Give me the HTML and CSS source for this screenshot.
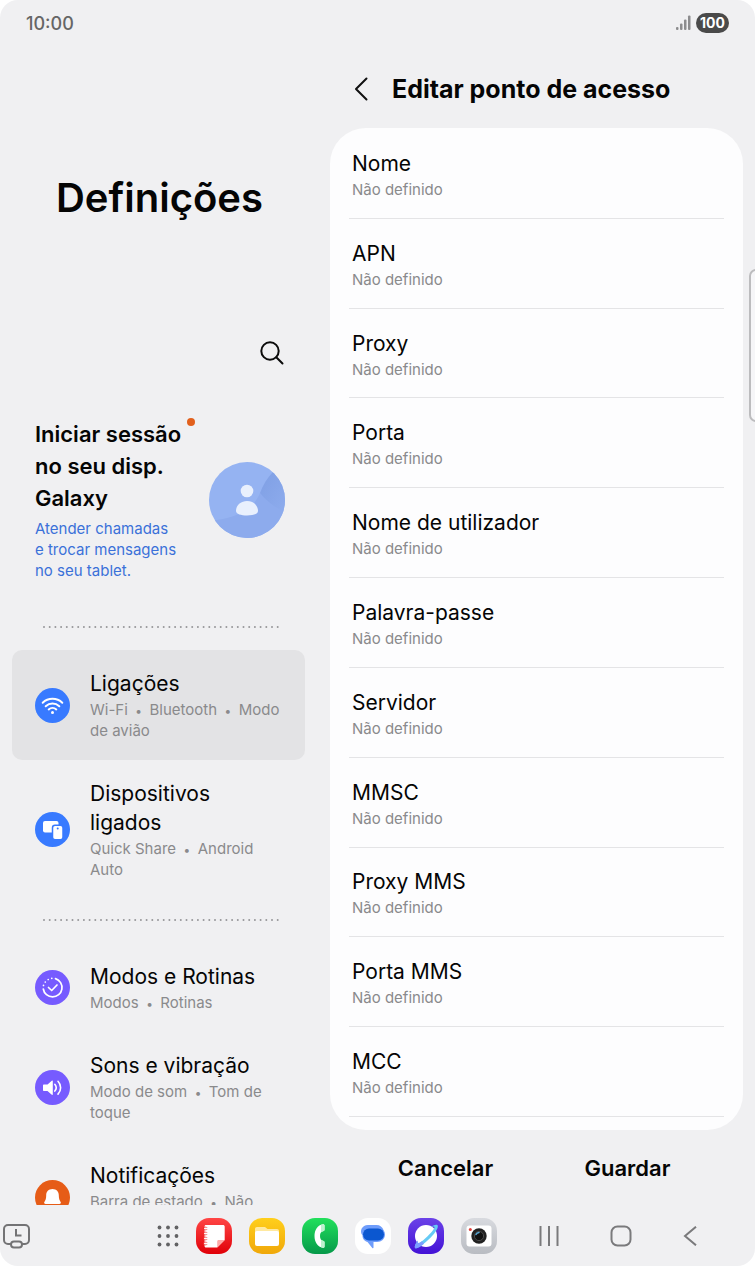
FILE: index.html
```html
<!DOCTYPE html>
<html lang="pt">
<head>
	<meta charset="utf-8">
	<meta name="viewport" content="width=device-width, initial-scale=1">
	<title>Definições</title>
	<link rel="stylesheet" href="styles.css">
</head>
<body>
	<div class="screen">
		<header class="statusbar">
			<span class="clock">10:00</span>
			<svg class="signal" width="15" height="16" viewBox="0 0 15 16" fill="#8c8c8e">
				<rect x="0" y="12" width="2.500" height="3" rx="1"/>
				<rect x="4" y="8.500" width="2.500" height="6.500" rx="1"/>
				<rect x="8" y="4.500" width="2.500" height="10.500" rx="1"/>
				<rect x="12" y="0.500" width="2.500" height="14.500" rx="1"/>
			</svg>
			<span class="battery">100</span>
		</header>

		<main class="panes">
			<nav class="sidebar">
				<h1 class="title">Definições</h1>
				<button class="search" aria-label="Procurar">
					<svg width="24" height="24" viewBox="0 0 24 24" fill="none" stroke="#0b0b0b" stroke-width="2" stroke-linecap="round">
						<circle cx="10" cy="10" r="8.700"/>
						<path d="M16.300 16.300 22.500 22.500"/>
					</svg>
				</button>

				<a class="account" href="#">
					<span class="account-text">
						<span class="account-title">Iniciar sessão<br>no seu disp.<br>Galaxy<i class="dot"></i></span>
						<span class="account-sub">Atender chamadas<br>e trocar mensagens<br>no seu tablet.</span>
					</span>
					<svg width="76" height="76" viewBox="0 0 76 76">
						<defs>
							<clipPath id="avatar"><circle cx="38" cy="38" r="38"/></clipPath>
							<linearGradient id="fold" x1="0" y1="0" x2="1" y2="1"><stop offset="0" stop-color="#7f9fe4"/><stop offset="1" stop-color="#8fadee"/></linearGradient>
						</defs>
						<g clip-path="url(#avatar)">
							<rect width="76" height="76" fill="#95b3f2"/>
							<path d="M0 59C28 56 44 48 51 31L76 50V76H0z" fill="#8dabed"/>
							<path d="M51 31C54 23 58 16 64 10L80 20V52C70 48 59 41 51 31z" fill="url(#fold)"/>
						</g>
						<circle cx="38" cy="29" r="6.300" fill="#e9f0fd"/>
						<path d="M27 49c0-6 5-10 11-10s11 4 11 10c0 3-5 4.500-11 4.500S27 52 27 49z" fill="#e9f0fd"/>
					</svg>
				</a>

				<svg class="dots" height="2"><line x1="1" y1="1" x2="100%" y2="1"/></svg>

				<a class="item selected" href="#">
					<svg class="icon" viewBox="0 0 35 35">
						<circle cx="17.500" cy="17.500" r="17.500" fill="#387aff"/>
						<g fill="none" stroke="#fff" stroke-width="2" stroke-linecap="round">
							<path d="M7.700 14.700c5.500-5.200 14.100-5.200 19.600 0"/>
							<path d="M10.700 18.200c3.900-3.600 9.700-3.600 13.600 0"/>
							<path d="M13.700 21.400c2.200-2 5.400-2 7.600 0"/>
						</g>
						<circle cx="17.500" cy="24.400" r="1.500" fill="#fff"/>
					</svg>
					<span class="text">
						<span class="label">Ligações</span>
						<span class="sub">Wi-Fi<b>•</b>Bluetooth<b>•</b>Modo<br>de avião</span>
					</span>
				</a>
				<a class="item" href="#">
					<svg class="icon" viewBox="0 0 35 35">
						<circle cx="17.500" cy="17.500" r="17.500" fill="#387aff"/>
						<rect x="8" y="9" width="15.500" height="11.500" rx="2" fill="#fff"/>
						<rect x="17.500" y="13.200" width="10.500" height="14.500" rx="2.500" fill="#fff" stroke="#387aff" stroke-width="1.500"/>
						<circle cx="22.700" cy="16.500" r="1" fill="#387aff"/>
					</svg>
					<span class="text">
						<span class="label">Dispositivos<br>ligados</span>
						<span class="sub">Quick Share<b>•</b>Android<br>Auto</span>
					</span>
				</a>

				<svg class="dots" height="2"><line x1="1" y1="1" x2="100%" y2="1"/></svg>

				<a class="item" href="#">
					<svg class="icon" viewBox="0 0 35 35">
						<circle cx="17.500" cy="17.500" r="17.500" fill="#765bff"/>
						<g fill="none" stroke="#fff" stroke-width="1.700" stroke-linecap="round">
							<path d="M20.500 8.600A9.400 9.400 0 1 1 8.300 19"/>
							<path d="M8.500 15.400v0M10.300 12v0M13.200 9.500v0M16.800 8.300v0"/>
							<path d="M13.500 17.500 16.700 20.500 22 15" stroke-linejoin="round"/>
						</g>
					</svg>
					<span class="text">
						<span class="label">Modos e Rotinas</span>
						<span class="sub">Modos<b>•</b>Rotinas</span>
					</span>
				</a>
				<a class="item" href="#">
					<svg class="icon" viewBox="0 0 35 35">
						<circle cx="17.500" cy="17.500" r="17.500" fill="#765bff"/>
						<path d="M9 14.500h3.500l4.300-3.800c.5-.4 1-.2 1 .5v13c0 .7-.5.900-1 .5l-4.300-3.800H9c-.6 0-1-.4-1-1v-4.400c0-.6.4-1 1-1z" fill="#fff"/>
						<path d="M20.500 14.300c1.700 2 1.700 4.800 0 6.800M23.700 11.300c3.500 3.700 3.500 9.100 0 12.800" transform="translate(-.7 0)" fill="none" stroke="#fff" stroke-width="1.600" stroke-linecap="round"/>
					</svg>
					<span class="text">
						<span class="label">Sons e vibração</span>
						<span class="sub">Modo de som<b>•</b>Tom de<br>toque</span>
					</span>
				</a>
				<a class="item" href="#">
					<svg class="icon" viewBox="0 0 35 35">
						<circle cx="17.500" cy="17.500" r="17.500" fill="#e65c17"/>
						<path d="M17.500 9c-4 0-6.300 2.800-6.300 6.300 0 3.500-.7 5-1.700 6.500-.8 1.200-.2 2.200 1 2.200h14c1.200 0 1.800-1 1-2.200-1-1.500-1.700-3-1.700-6.500 0-3.500-2.300-6.300-6.300-6.300zM15 25h5a2.500 2.500 0 0 1-5 0z" fill="#fff"/>
					</svg>
					<span class="text">
						<span class="label">Notificações</span>
						<span class="sub">Barra de estado<b>•</b>Não<br>incomodar</span>
					</span>
				</a>
			</nav>

			<section class="detail">
				<div class="detail-head">
					<button class="back" aria-label="Voltar">
						<svg width="14" height="24" viewBox="0 0 14 24" fill="none" stroke="#111" stroke-width="2" stroke-linecap="round" stroke-linejoin="round">
							<path d="M12.500 1.500 2 12l10.500 10.500"/>
						</svg>
					</button>
					<h2 class="subtitle">Editar ponto de acesso</h2>
				</div>
				<div class="card">
					<button class="field"><span class="label">Nome</span><span class="sub">Não definido</span></button>
					<button class="field"><span class="label">APN</span><span class="sub">Não definido</span></button>
					<button class="field"><span class="label">Proxy</span><span class="sub">Não definido</span></button>
					<button class="field"><span class="label">Porta</span><span class="sub">Não definido</span></button>
					<button class="field"><span class="label">Nome de utilizador</span><span class="sub">Não definido</span></button>
					<button class="field"><span class="label">Palavra-passe</span><span class="sub">Não definido</span></button>
					<button class="field"><span class="label">Servidor</span><span class="sub">Não definido</span></button>
					<button class="field"><span class="label">MMSC</span><span class="sub">Não definido</span></button>
					<button class="field"><span class="label">Proxy MMS</span><span class="sub">Não definido</span></button>
					<button class="field"><span class="label">Porta MMS</span><span class="sub">Não definido</span></button>
					<button class="field"><span class="label">MCC</span><span class="sub">Não definido</span></button>
				</div>
				<div class="actions">
					<button class="action">Cancelar</button>
					<button class="action">Guardar</button>
				</div>
			</section>
		</main>

		<footer class="taskbar">
			<button aria-label="Recentes">
				<svg width="28" height="26" viewBox="0 0 28 26" fill="none" stroke="#737375" stroke-width="2">
					<path d="M8 21H5a4 4 0 0 1-4-4V6a4 4 0 0 1 4-4h17a4 4 0 0 1 4 4v11a4 4 0 0 1-4 4h-3"/>
					<rect x="8" y="18.500" width="11" height="6" rx="3"/>
					<path d="M13 6v6.500h5.500"/>
				</svg>
			</button>
			<div class="apps">
				<button aria-label="Aplicações">
					<svg width="22" height="22" viewBox="0 0 22 22" fill="#626264">
						<circle cx="2.500" cy="2.500" r="1.900"/><circle cx="11" cy="2.500" r="1.900"/><circle cx="19.500" cy="2.500" r="1.900"/>
						<circle cx="2.500" cy="11" r="1.900"/><circle cx="11" cy="11" r="1.900"/><circle cx="19.500" cy="11" r="1.900"/>
						<circle cx="2.500" cy="19.500" r="1.900"/><circle cx="11" cy="19.500" r="1.900"/><circle cx="19.500" cy="19.500" r="1.900"/>
					</svg>
				</button>
				<button class="app notes" aria-label="Notas">
					<svg viewBox="0 0 36 36">
						<path d="M10 7h17c1 0 1.700.7 1.700 1.700V22l-7.500 7.500H10c-1 0-1.500-.6-1.500-1.500V8.500C8.500 7.600 9 7 10 7z" fill="#fff"/>
						<path d="M28.700 22h-6c-1 0-1.500.6-1.500 1.500v6z" fill="#ffaaa8"/>
						<path d="M8.500 10.500h1.500M8.500 15.500h1.500M8.500 20.500h1.500M8.500 25.500h1.500" stroke="#f12b2b" stroke-width="3.400" stroke-linecap="round"/>
						<path d="M9 10.500h3M9 15.500h3M9 20.500h3M9 25.500h3" stroke="#fff" stroke-width="2" stroke-linecap="round"/>
					</svg>
				</button>
				<button class="app files" aria-label="Os meus ficheiros">
					<svg viewBox="0 0 36 36">
						<path d="M6 11c0-1.200.8-2 2-2h8l2.500 2H28c1.200 0 2 .8 2 2v5H6z" fill="#ffe9a0"/>
						<rect x="6" y="13" width="24" height="15" rx="2" fill="#fff"/>
					</svg>
				</button>
				<button class="app phone" aria-label="Telefone">
					<svg viewBox="0 0 36 36">
						<path d="M21 6.200c-5.500.6-8.500 6-8.500 11.800s3 11.200 8.500 11.800c.9.100 1.500-.5 1.500-1.400v-4.200c0-.9-.6-1.400-1.500-1.500-2-.2-3-2-3-4.700s1-4.500 3-4.700c.9-.1 1.500-.6 1.500-1.500V7.600c0-.9-.6-1.500-1.500-1.400z" fill="#fff"/>
						<path d="M21 22.700c.9.100 1.500.6 1.500 1.500v4.200c0 .9-.6 1.500-1.500 1.400l-2-.5V22zM21 13.300c.9-.1 1.500-.6 1.500-1.500V7.600c0-.9-.6-1.500-1.500-1.400l-2 .5V14z" fill="#bdf2cf"/>
					</svg>
				</button>
				<button class="app messages" aria-label="Mensagens">
					<svg viewBox="0 0 36 36">
						<path d="M13 7h8.500c3.500 0 6 2 7 5 1 1.500 1.500 3 1.500 4.500 0 4.500-3.500 7.500-8 7.500h-3.500v5.500c0 .8-.7 1-1.200.5L12.500 24C8.500 22.800 7.500 20 7.500 17.500 4 13 7 7 13 7z" fill="#6f9dfb"/>
						<rect x="8" y="10.500" width="21" height="12" rx="6" fill="#0b57d0"/>
					</svg>
				</button>
				<button class="app browser" aria-label="Internet">
					<svg viewBox="0 0 36 36">
						<circle cx="18" cy="18" r="11" fill="#fff"/>
						<path d="M10 22.500C7 26 6 29.500 7.500 30.300 11 31.500 31 14 29.800 7.800 29.200 5.600 25.500 7 22 9.300c2.300-.7 4.500-1.300 4.500-.1C26.500 12 13.500 25 10.500 25c-1 0-.9-1.200-.5-2.500z" fill="#66cbf5"/>
						<path d="M10 22.500C7 26 6 29.500 7.500 30.300c1.200.5 4.700-1.500 8.500-4.600l-2-2.500c-1.600 1.100-2.800 1.800-3.500 1.800-1 0-.9-1.200-.5-2.500z" fill="#7d9dff"/>
					</svg>
				</button>
				<button class="app camera" aria-label="Câmara">
					<svg viewBox="0 0 36 36">
						<rect x="5.500" y="7.500" width="25" height="21" rx="3" fill="#fff"/>
						<circle cx="9.300" cy="11.500" r="1.500" fill="#e0403b"/>
						<circle cx="18" cy="18" r="7.700" fill="#222"/>
						<circle cx="18" cy="18" r="4.600" fill="#111" stroke="#4a4a4a" stroke-width="1"/>
						<path d="M15 16.500a3.500 3.500 0 0 1 3-2" stroke="#59a9d8" stroke-width="1.500" fill="none" stroke-linecap="round"/>
					</svg>
				</button>
			</div>
			<div class="keys">
				<button aria-label="Recentes">
					<svg width="20" height="20" viewBox="0 0 20 20" stroke="#7a7a7c" stroke-width="2"><path d="M1.500 0v20M10 0v20M18.500 0v20"/></svg>
				</button>
				<button aria-label="Início">
					<svg width="22" height="22" viewBox="0 0 22 22" fill="none" stroke="#7a7a7c" stroke-width="2"><rect x="1.500" y="1.500" width="19" height="19" rx="6"/></svg>
				</button>
				<button aria-label="Voltar">
					<svg width="14" height="20" viewBox="0 0 14 20" fill="none" stroke="#7a7a7c" stroke-width="2"><path d="M13 .7 2 10l11 9.300"/></svg>
				</button>
			</div>
		</footer>

		<div class="edge"></div>
	</div>
</body>
</html>
```
FILE: styles.css
```css
* {
	box-sizing: border-box;
}
body {
	margin: 0;
	background: #fff;
	color: #050505;
	font-family: Inter, Roboto, sans-serif;
}
a {
	color: inherit;
	text-decoration: none;
}
button {
	padding: 0;
	border: 0;
	background: none;
	color: inherit;
	font: inherit;
	cursor: pointer;
}
svg {
	display: block;
	flex-shrink: 0;
}
.screen {
	position: relative;
	display: flex;
	flex-direction: column;
	height: 100vh;
	overflow: hidden;
	border-radius: 18px;
	background: #f0f0f2;
}

/* status bar */
.statusbar {
	display: flex;
	align-items: center;
	height: 46px;
	padding: 0 26px;
}
.clock {
	margin-right: auto;
	color: #666;
	font-size: 18px;
	font-weight: 500;
}
.battery {
	margin-left: 5px;
	padding: 0 4px;
	border-radius: 10px;
	background: #4a4a4a;
	color: #fff;
	font-size: 14px;
	font-weight: 700;
	line-height: 20px;
}

/* panes */
.panes {
	display: flex;
	flex: 1;
	min-height: 0;
}
.sidebar {
	width: 317px;
	padding: 0 12px;
	overflow: hidden;
}
.title {
	margin: 124px 0 0;
	padding-left: 2px;
	font-size: 40px;
	font-weight: 600;
	line-height: 56px;
	text-align: center;
}
.search {
	display: block;
	margin: 115px 21px 0 auto;
}
.account {
	display: flex;
	align-items: center;
	justify-content: space-between;
	padding: 53px 20px 45px 23px;
}
.account-text,
.account-title,
.account-sub,
.label,
.sub {
	display: block;
}
.account-title {
	position: relative;
	font-size: 22px;
	font-weight: 600;
	line-height: 32px;
}
.dot {
	position: absolute;
	top: 0;
	right: -14px;
	width: 8px;
	height: 8px;
	border-radius: 50%;
	background: #e2601c;
}
.account-sub {
	padding-top: 4px;
	color: #3b71d9;
	font-size: 15px;
	line-height: 21px;
}
.dots {
	width: 236px;
	margin: 0 auto 22px 31px;
	stroke: #97979a;
	stroke-width: 2;
	stroke-linecap: round;
	stroke-dasharray: 0 5.700;
}
.item {
	display: flex;
	align-items: center;
	gap: 20px;
	padding: 19px 12px 19px 23px;
	border-radius: 10px;
}
.item + .dots {
	margin-top: 20px;
}
.selected {
	background: #e3e3e5;
}
.icon {
	width: 35px;
	height: 35px;
}
.label {
	font-size: 21px;
	line-height: 29px;
}
.sub {
	padding-top: 1px;
	color: #8a8a8c;
	font-size: 15px;
	line-height: 21px;
	white-space: nowrap;
}
.sub b {
	margin: 0 8px;
	font-size: 12px;
	line-height: 1;
}

/* access point form */
.detail {
	display: flex;
	flex: 1;
	flex-direction: column;
	padding: 0 12px 0 13px;
}
.detail-head {
	display: flex;
	align-items: center;
	gap: 24px;
	height: 82px;
	padding: 4px 0 0 24px;
}
.subtitle {
	margin: 0;
	font-size: 25px;
	font-weight: 700;
	line-height: 32px;
}
.card {
	display: flex;
	flex: 1;
	flex-direction: column;
	padding: 1px 19px 13px;
	border-radius: 36px;
	background: #fdfdfe;
}
.field {
	flex: 1;
	padding: 2px 3px 0;
	border-bottom: 1px solid #e4e4e6;
	text-align: left;
}
.actions {
	display: flex;
	justify-content: center;
	height: 75px;
}
.action {
	width: 182px;
	font-size: 22px;
	font-weight: 600;
}

/* taskbar */
.taskbar {
	display: flex;
	align-items: center;
	height: 61px;
	padding: 0 58px 0 3px;
}
.apps {
	display: flex;
	align-items: center;
	gap: 17px;
	margin: 0 42px 0 auto;
}
.app {
	width: 36px;
	height: 36px;
	border-radius: 13px;
}
.notes {
	background: linear-gradient(#ff4645, #e00008);
}
.files {
	background: linear-gradient(#ffcf1c, #f0a80a);
}
.phone {
	background: linear-gradient(#22e05c, #06994a);
}
.messages {
	background: #fff;
}
.browser {
	background: linear-gradient(#6b42e8, #4312d6);
}
.camera {
	background: linear-gradient(#d8dadf, #b9bcc2);
}
.keys {
	display: flex;
	align-items: center;
	gap: 51px;
}

/* edge panel handle */
.edge {
	position: absolute;
	top: 269px;
	right: -8px;
	width: 14px;
	height: 153px;
	border: 2px solid #bcbcbe;
	border-radius: 7px;
	background: #f6f6f8;
}
```
